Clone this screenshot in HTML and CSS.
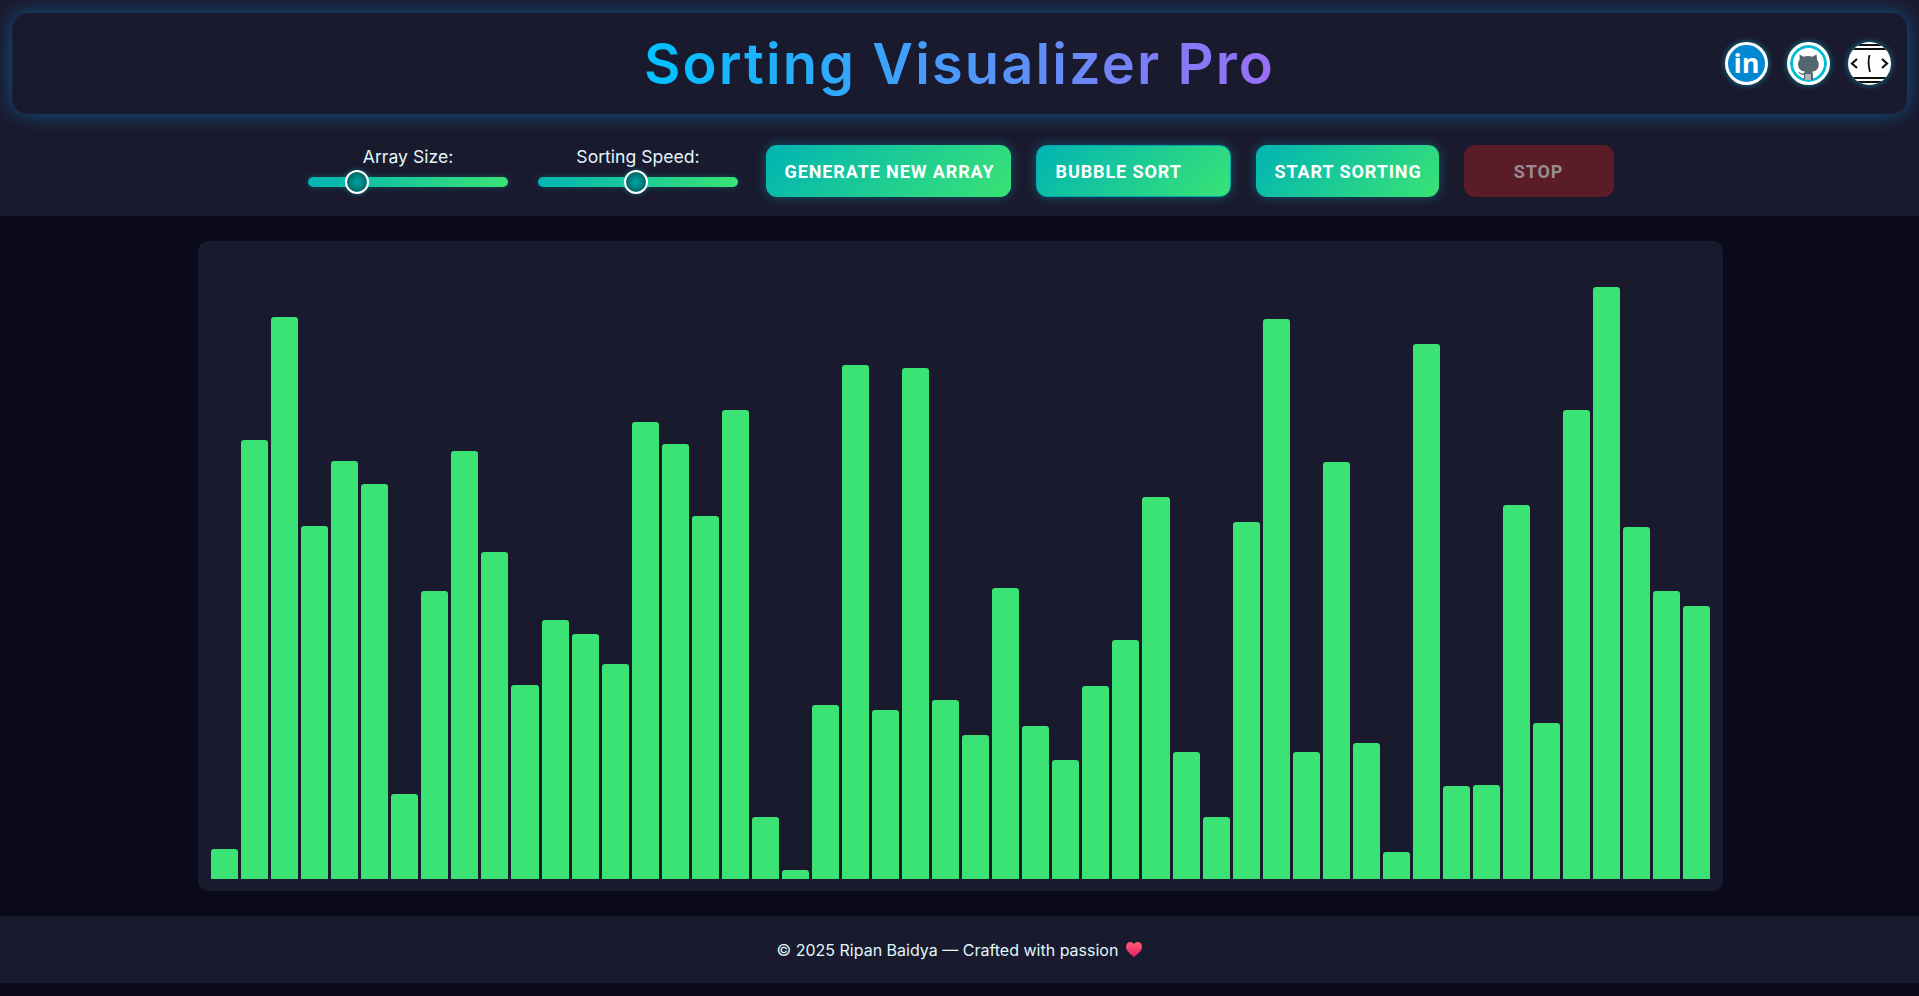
FILE: index.html
```html
<!DOCTYPE html>
<html>
<head>
    <title>Sorting Visualizer Pro</title>
    <link rel="stylesheet" href="styles.css">
</head>
<body>
    <div class="top">
        <header class="title-bar">
            <h1>Sorting Visualizer Pro</h1>
            <div class="socials">
                <a class="social linkedin" href="#">in</a>
                <a class="social github" href="#">
                    <svg viewBox="0 0 32 32" width="32" height="32">
                        <path fill="#546670" d="M7.5 5.5l4.3 2.3a11 11 0 0 1 8.4 0l4.3-2.3.6 5.2c1.2 1.5 1.7 3 1.7 4.8 0 4.6-3.2 6.9-7 7.3.9.8 1.2 1.7 1.2 3V31h-9v-5.3c-2.7.6-4.4-.2-5.6-2.6l2 .6c1.2 1 2.4 1 3.7.6.1-.8.4-1.3.9-1.8-3.800-.4-7-2.700-7-7.300 0-1.800.5-3.300 1.700-4.800z"/>
                        <path stroke="#fff" stroke-width="1" d="M14 25v6M16 25v6M18 25v6"/>
                    </svg>
                </a>
                <a class="social code" href="#">
                    <svg viewBox="0 0 43 43" width="43" height="43">
                        <rect width="43" height="43" fill="#fff"/>
                        <path stroke="#111" stroke-width="2" d="M0 3h43M0 7h43M0 36h43M0 40h43"/>
                        <path fill="none" stroke="#111" stroke-width="2.200" d="M9 17l-5 4.500 5 4.500M34 17l5 4.500-5 4.500"/>
                        <path fill="none" stroke="#111" stroke-width="1.800" d="M21.500 13c-1.500 5-1.200 10 .5 17"/>
                    </svg>
                </a>
            </div>
        </header>
        <div class="controls">
            <div class="slider-group">
                <label for="size">Array Size:</label>
                <input id="size" class="slider" type="range" min="10" max="200" value="50">
            </div>
            <div class="slider-group">
                <label for="speed">Sorting Speed:</label>
                <input id="speed" class="slider" type="range" min="0" max="100" value="49">
            </div>
            <button class="btn btn-generate">Generate New Array</button>
            <select class="btn btn-algo">
                <option>Bubble Sort</option>
                <option>Merge Sort</option>
                <option>Quick Sort</option>
            </select>
            <button class="btn btn-start">Start Sorting</button>
            <button class="btn btn-stop" disabled>Stop</button>
        </div>
    </div>

    <main class="stage">
        <div class="chart">
            <div class="bar" style="height:30px"></div>
            <div class="bar" style="height:439px"></div>
            <div class="bar" style="height:562px"></div>
            <div class="bar" style="height:353px"></div>
            <div class="bar" style="height:418px"></div>
            <div class="bar" style="height:395px"></div>
            <div class="bar" style="height:85px"></div>
            <div class="bar" style="height:288px"></div>
            <div class="bar" style="height:428px"></div>
            <div class="bar" style="height:327px"></div>
            <div class="bar" style="height:194px"></div>
            <div class="bar" style="height:259px"></div>
            <div class="bar" style="height:245px"></div>
            <div class="bar" style="height:215px"></div>
            <div class="bar" style="height:457px"></div>
            <div class="bar" style="height:435px"></div>
            <div class="bar" style="height:363px"></div>
            <div class="bar" style="height:469px"></div>
            <div class="bar" style="height:62px"></div>
            <div class="bar" style="height:9px"></div>
            <div class="bar" style="height:174px"></div>
            <div class="bar" style="height:514px"></div>
            <div class="bar" style="height:169px"></div>
            <div class="bar" style="height:511px"></div>
            <div class="bar" style="height:179px"></div>
            <div class="bar" style="height:144px"></div>
            <div class="bar" style="height:291px"></div>
            <div class="bar" style="height:153px"></div>
            <div class="bar" style="height:119px"></div>
            <div class="bar" style="height:193px"></div>
            <div class="bar" style="height:239px"></div>
            <div class="bar" style="height:382px"></div>
            <div class="bar" style="height:127px"></div>
            <div class="bar" style="height:62px"></div>
            <div class="bar" style="height:357px"></div>
            <div class="bar" style="height:560px"></div>
            <div class="bar" style="height:127px"></div>
            <div class="bar" style="height:417px"></div>
            <div class="bar" style="height:136px"></div>
            <div class="bar" style="height:27px"></div>
            <div class="bar" style="height:535px"></div>
            <div class="bar" style="height:93px"></div>
            <div class="bar" style="height:94px"></div>
            <div class="bar" style="height:374px"></div>
            <div class="bar" style="height:156px"></div>
            <div class="bar" style="height:469px"></div>
            <div class="bar" style="height:592px"></div>
            <div class="bar" style="height:352px"></div>
            <div class="bar" style="height:288px"></div>
            <div class="bar" style="height:273px"></div>
        </div>
    </main>

    <footer class="footer">
        <span>© 2025 Ripan Baidya — Crafted with passion</span>
        <svg class="heart" viewBox="0 0 16 15" width="16" height="15">
            <defs>
                <linearGradient id="heart-fill" x1="0" y1="0" x2="0" y2="1">
                    <stop offset="0" stop-color="#ff5a70"/>
                    <stop offset="1" stop-color="#e8206a"/>
                </linearGradient>
            </defs>
            <path fill="url(#heart-fill)" d="M8 15C3 11 0 8.500 0 4.700 0 2 2 0 4.300 0 5.900 0 7.200.8 8 2.200 8.800.8 10.100 0 11.700 0 14 0 16 2 16 4.700 16 8.500 13 11 8 15z"/>
        </svg>
    </footer>
</body>
</html>
```

FILE: styles.css
```css
* {
    box-sizing: border-box;
}
body {
    margin: 0;
    min-height: 996px;
    background-color: #0a0a1a;
    color: #e0f7fa;
    font-family: Inter, "Noto Sans", sans-serif;
}

/* top part */
.top {
    height: 216px;
    padding: 13px 12px 0;
    background-color: #1a1a2e;
}
.title-bar {
    display: grid;
    grid-template-columns: 1fr auto 1fr;
    align-items: center;
    height: 101px;
    background-color: #1a1a2e;
    border-radius: 16px;
    box-shadow: 0 0 20px rgba(0, 174, 255, 0.42);
}
h1 {
    grid-column: 2;
    margin: 0;
    font-size: 56px;
    font-weight: 600;
    letter-spacing: 2.1px;
    background: linear-gradient(90deg, #00c2ff, #9a6ef5);
    -webkit-background-clip: text;
    background-clip: text;
    color: transparent;
}
.socials {
    grid-column: 3;
    justify-self: end;
    display: flex;
    gap: 18.5px;
    margin-right: 16px;
}
.social {
    display: flex;
    align-items: center;
    justify-content: center;
    width: 43px;
    height: 43px;
    overflow: hidden;
    border-radius: 50%;
    text-decoration: none;
    box-shadow: 0 0 6px rgba(0, 229, 255, 0.5);
}
.linkedin {
    border: 3px solid #fff;
    background-color: #0288d1;
    color: #fff;
    font-family: "Open Sans", sans-serif;
    font-size: 27px;
    font-weight: 700;
    line-height: 1;
    padding-bottom: 3px;
}
.github {
    border: 3px solid #fff;
    background-color: #fff;
    box-shadow: inset 0 0 0 3px #00bcd4, 0 0 6px rgba(0, 229, 255, 0.5);
    align-items: flex-end;
    padding-bottom: 1px;
}

/* controls */
.controls {
    display: flex;
    justify-content: center;
    align-items: center;
    gap: 25px;
    margin-top: 31px;
}
.slider-group {
    display: flex;
    flex-direction: column;
    align-items: center;
    gap: 9px;
    margin: 0 2.5px;
}
.slider-group label {
    font-size: 17.6px;
    line-height: 22px;
}
.slider {
    -webkit-appearance: none;
    appearance: none;
    display: block;
    width: 200px;
    height: 10px;
    margin: 0 0 10px;
    border-radius: 5px;
    background: linear-gradient(90deg, #00b4b4, #3ae374);
    box-shadow: 0 0 6px rgba(0, 200, 180, 0.3);
}
.slider::-webkit-slider-thumb {
    -webkit-appearance: none;
    width: 24px;
    height: 24px;
    border: 2px solid #fff;
    border-radius: 50%;
    background: radial-gradient(circle, #00a5a5, #00504f);
    box-shadow: 0 0 5px rgba(0, 229, 255, 0.4);
}
.btn {
    height: 52px;
    padding: 0 19px;
    border: none;
    border-radius: 11px;
    background: linear-gradient(135deg, #00b4b4, #3ae374);
    color: #fff;
    font-family: Roboto, sans-serif;
    font-size: 18px;
    font-weight: 700;
    letter-spacing: 0.9px;
    text-transform: uppercase;
    white-space: nowrap;
    box-shadow: 0 0 12px rgba(0, 229, 255, 0.3);
    cursor: pointer;
}
.btn-generate {
    width: 245px;
}
.btn-algo {
    -webkit-appearance: none;
    appearance: none;
    width: 195px;
    border: 1px solid #00a8b0;
}
.btn-start {
    width: 183px;
}
.btn-stop {
    width: 150px;
    background: #5a1c26;
    color: #9b8b93;
    box-shadow: none;
    cursor: not-allowed;
}

/* bars */
.stage {
    display: flex;
    justify-content: center;
    padding: 25px 0 25px 2px;
}
.chart {
    display: flex;
    align-items: flex-end;
    gap: 3px;
    width: 1525px;
    height: 650px;
    padding: 0 13px 12px;
    background-color: #1a1a2e;
    border-radius: 10px;
}
.bar {
    flex: 1;
    background-color: #3ae374;
    border-radius: 3px 3px 0 0;
}

/* footer */
.footer {
    display: flex;
    justify-content: center;
    align-items: center;
    gap: 8px;
    height: 67px;
    background-color: #1a1a2e;
    font-size: 16px;
}
```
